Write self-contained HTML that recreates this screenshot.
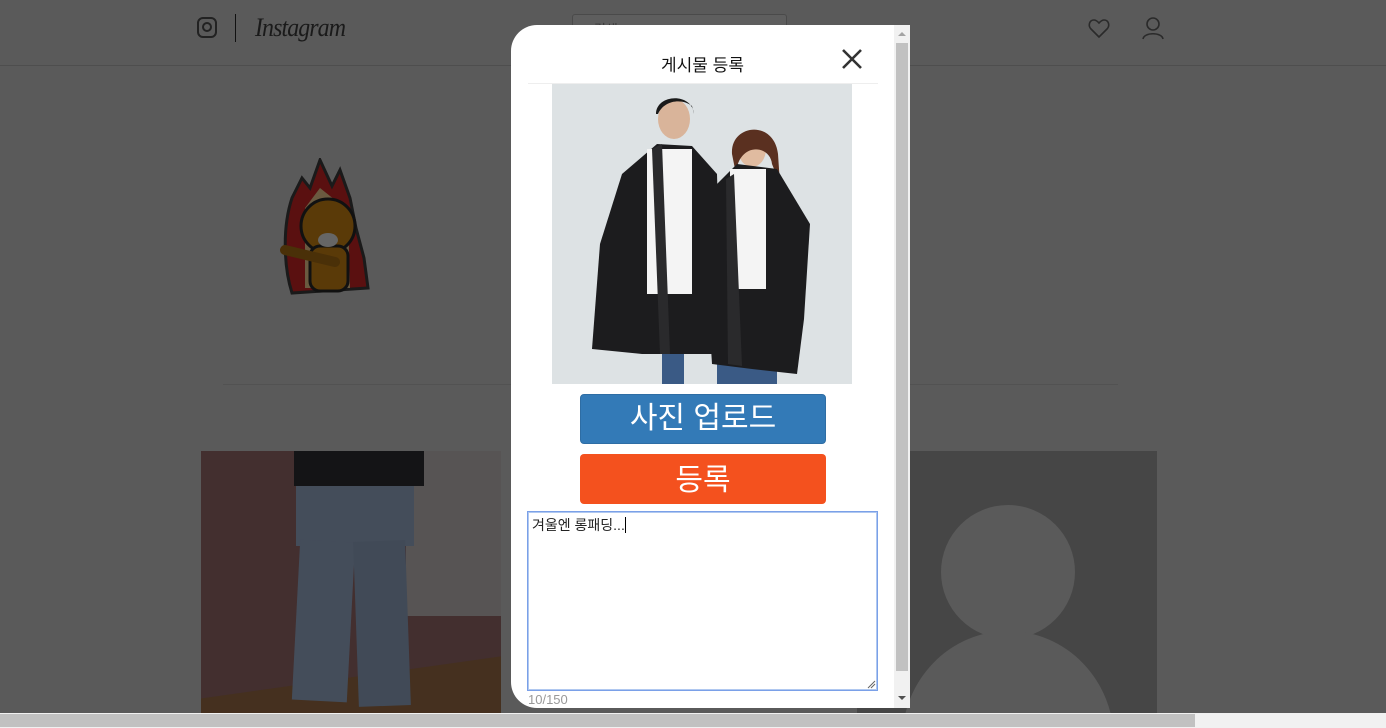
<!DOCTYPE html>
<html><head><meta charset="utf-8">
<style>
*{margin:0;padding:0;box-sizing:border-box}
html,body{width:1386px;height:728px;overflow:hidden;background:#5a5a5a;font-family:"Liberation Sans","Noto Sans CJK KR",sans-serif}
.abs{position:absolute}
#wrap{position:relative;width:1386px;height:728px;overflow:hidden}
</style></head><body><div id="wrap">
<!-- header -->
<div class="abs" style="left:0;top:65px;width:1386px;height:1px;background:#4e4e4e"></div>
<div class="abs" style="left:197px;top:17px;width:20px;height:21px;border:2px solid #222;border-radius:6px"></div>
<div class="abs" style="left:202px;top:22px;width:10px;height:10px;border:2px solid #222;border-radius:50%"></div>
<div class="abs" style="left:235px;top:14px;width:1px;height:28px;background:#111"></div>
<div class="abs" style="left:255px;top:13px;font-family:'Liberation Serif',serif;font-style:italic;font-size:26px;color:#1a1a1a;letter-spacing:-1px;transform:scaleX(0.92);transform-origin:left">Instagram</div>
<div class="abs" style="left:572px;top:14px;width:215px;height:26px;border:1px solid #4a4a4a;border-radius:3px;background:#5e5e5e;font-size:13px;color:#3a3a3a;padding:4px 10px">⌕ 검색</div>
<svg class="abs" style="left:1087px;top:16px" width="24" height="24" viewBox="0 0 24 24"><path d="M12 21 L4 13 C1 10 2 4 7 4 C9.5 4 11 6 12 7 C13 6 14.5 4 17 4 C22 4 23 10 20 13 Z" fill="none" stroke="#2a2a2a" stroke-width="1.6"/></svg>
<svg class="abs" style="left:1140px;top:15px" width="26" height="26" viewBox="0 0 26 26"><circle cx="13" cy="9" r="6" fill="none" stroke="#2a2a2a" stroke-width="1.6"/><path d="M3 24 C4 17 22 17 23 24" fill="none" stroke="#2a2a2a" stroke-width="1.6"/></svg>
<!-- avatar -->
<svg class="abs" style="left:280px;top:158px" width="96" height="140" viewBox="0 0 96 140">
<path d="M12 135 C4 110 2 70 12 40 L22 20 L30 30 L40 2 L52 28 L60 12 L70 40 L76 70 L84 100 L88 130 Z" fill="#5a1010" stroke="#1a1a1a" stroke-width="3"/>
<path d="M25 130 L25 50 L40 30 L55 42 L68 55 L70 130 Z" fill="#6a5a40"/>
<circle cx="48" cy="68" r="27" fill="#5a3a08" stroke="#111" stroke-width="3"/>
<rect x="30" y="88" width="38" height="45" rx="10" fill="#5a3a08" stroke="#111" stroke-width="3"/>
<ellipse cx="48" cy="82" rx="10" ry="7" fill="#666"/>
<path d="M5 92 L55 104" stroke="#4a3008" stroke-width="10" stroke-linecap="round"/>
</svg>
<div class="abs" style="left:223px;top:384px;width:895px;height:1px;background:#525252"></div>
<!-- left photo -->
<div class="abs" style="left:201px;top:451px;width:300px;height:262px;background:#432f2f;overflow:hidden">
<div class="abs" style="left:205px;top:0;width:95px;height:165px;background:#575454"></div>
<div class="abs" style="left:0;top:225px;width:320px;height:60px;background:#45301f;transform:skewY(-8deg)"></div>
<div class="abs" style="left:93px;top:0;width:130px;height:35px;background:#141416"></div>
<div class="abs" style="left:95px;top:35px;width:118px;height:60px;background:#444d5a"></div>
<div class="abs" style="left:95px;top:90px;width:55px;height:160px;background:#444d5a;transform:rotate(3deg)"></div>
<div class="abs" style="left:155px;top:90px;width:52px;height:165px;background:#414a57;transform:rotate(-2deg)"></div>
</div>
<!-- right photo -->
<div class="abs" style="left:857px;top:451px;width:300px;height:262px;background:#464646;overflow:hidden">
<div class="abs" style="left:84px;top:54px;width:134px;height:134px;border-radius:50%;background:#5a5a5a"></div>
<div class="abs" style="left:45px;top:180px;width:212px;height:220px;border-radius:50%;background:#5a5a5a"></div>
</div>
<!-- modal -->
<div class="abs" style="left:511px;top:25px;width:399px;height:683px;background:#fff;border-radius:26px 0 0 26px;overflow:hidden">
<div class="abs" style="left:0;top:26px;width:383px;text-align:center;font-size:17px;color:#111">게시물 등록</div>
<svg class="abs" style="left:330px;top:23px" width="22" height="22" viewBox="0 0 22 22"><path d="M2 2 L20 20 M20 2 L2 20" stroke="#333" stroke-width="2.6"/></svg>
<div class="abs" style="left:17px;top:58px;width:350px;height:1px;background:#eee"></div>
<!-- photo -->
<svg class="abs" style="left:41px;top:59px" width="300" height="300" viewBox="0 0 300 300">
<rect width="300" height="300" fill="#dde2e4"/>
<rect x="110" y="180" width="22" height="120" fill="#3a5a85"/><rect x="165" y="180" width="22" height="120" fill="#3a5a85"/>
<rect x="180" y="190" width="45" height="110" fill="#3a5a85"/>
<ellipse cx="122" cy="35" rx="16" ry="20" fill="#d9b49a"/><path d="M104 30 C104 10 140 8 142 30 L140 22 C130 14 112 16 106 30Z" fill="#1a1a1a"/>
<ellipse cx="200" cy="65" rx="14" ry="18" fill="#e0bba0"/><path d="M180 70 C178 40 222 35 226 70 L228 100 L220 80 C218 60 186 58 184 90Z" fill="#5a3020"/>
<path d="M70 90 L105 60 L140 62 L165 90 L168 200 L160 270 L90 270 L40 265 L48 160 Z" fill="#1c1c1e"/>
<rect x="95" y="65" width="45" height="145" fill="#f4f4f4"/>
<path d="M100 65 L110 60 L118 270 L108 270Z" fill="#2a2a2c"/>
<path d="M155 110 L185 80 L225 85 L258 140 L252 235 L245 290 L200 285 L160 280 L155 200Z" fill="#1c1c1e"/>
<rect x="178" y="85" width="36" height="120" fill="#f4f4f4"/>
<path d="M174 95 L182 90 L190 282 L176 280Z" fill="#2a2a2c"/>
</svg>
<div class="abs" style="left:69px;top:369px;width:246px;height:50px;background:#337ab7;border:1px solid #2e6da4;border-radius:4px;color:#fff;font-size:30px;text-align:center;line-height:47px">사진 업로드</div>
<div class="abs" style="left:69px;top:429px;width:246px;height:50px;background:#f4511e;border-radius:4px;color:#fff;font-size:30px;text-align:center;line-height:54px">등록</div>
<div class="abs" style="left:16px;top:486px;width:351px;height:180px;border:1px solid #7aa0e8;box-shadow:0 0 0 1px #b0c8f0 inset;font-size:14px;color:#222;padding:3px 4px">겨울엔 롱패딩...<span style="display:inline-block;width:1px;height:16px;background:#000;vertical-align:-3px"></span></div>
<svg class="abs" style="left:355px;top:654px" width="10" height="10"><path d="M2 9 L9 2 M5 9 L9 5" stroke="#666" stroke-width="1"/></svg>
<div class="abs" style="left:17px;top:667px;font-size:13px;color:#999">10/150</div>
<!-- scrollbar -->
<div class="abs" style="left:383px;top:0;width:16px;height:683px;background:#f1f1f1"></div>
<div class="abs" style="left:385px;top:18px;width:12px;height:628px;background:#c1c1c1"></div>
<svg class="abs" style="left:386px;top:6px" width="10" height="6"><path d="M1 5 L5 1 L9 5Z" fill="#a3a3a3"/></svg>
<svg class="abs" style="left:386px;top:670px" width="10" height="6"><path d="M1 1 L5 5 L9 1Z" fill="#505050"/></svg>
</div>
<!-- bottom scrollbar -->
<div class="abs" style="left:0;top:713px;width:1386px;height:15px;background:#f1f1f1"></div>
<div class="abs" style="left:0;top:714px;width:1195px;height:13px;background:#c1c1c1"></div>
</div></body></html>
